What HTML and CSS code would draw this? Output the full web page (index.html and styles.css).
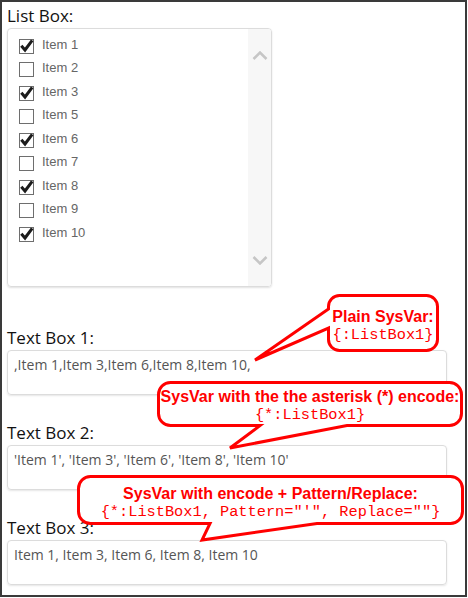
FILE: index.html
```html
<!DOCTYPE html>
<html lang="en">
<head>
  <meta charset="UTF-8">
  <title>SysVar Encode Demo</title>
  <link rel="stylesheet" href="styles.css">
</head>
<body>
  <svg class="defs" width="0" height="0">
    <symbol id="box-on" viewBox="0 0 15 15">
      <rect x="0.5" y="0.5" width="14" height="14" fill="#fff" stroke="#6e6e6e"/>
      <path d="M2.3 6.8 L6 11 L13.2 1.3" fill="none" stroke="#1c1c1c" stroke-width="3"/>
    </symbol>
    <symbol id="box-off" viewBox="0 0 15 15">
      <rect x="0.5" y="0.5" width="14" height="14" fill="#fff" stroke="#6e6e6e"/>
    </symbol>
  </svg>

  <div class="page">
    <div class="field list-field">
      <div class="label">List Box:</div>
      <div class="listbox">
        <ul class="items">
          <li><svg class="box"><use href="#box-on"/></svg>Item 1</li>
          <li><svg class="box"><use href="#box-off"/></svg>Item 2</li>
          <li><svg class="box"><use href="#box-on"/></svg>Item 3</li>
          <li><svg class="box"><use href="#box-off"/></svg>Item 5</li>
          <li><svg class="box"><use href="#box-on"/></svg>Item 6</li>
          <li><svg class="box"><use href="#box-off"/></svg>Item 7</li>
          <li><svg class="box"><use href="#box-on"/></svg>Item 8</li>
          <li><svg class="box"><use href="#box-off"/></svg>Item 9</li>
          <li><svg class="box"><use href="#box-on"/></svg>Item 10</li>
        </ul>
        <div class="scroll">
          <svg class="arrow" viewBox="0 0 16 9"><polyline points="1.5,8 8,1.5 14.5,8"/></svg>
          <svg class="arrow" viewBox="0 0 16 9"><polyline points="1.5,1 8,7.5 14.5,1"/></svg>
        </div>
      </div>
    </div>

    <div class="field text-field">
      <div class="label">Text Box 1:</div>
      <div class="textbox">,Item 1,Item 3,Item 6,Item 8,Item 10,</div>
    </div>

    <div class="field text-field">
      <div class="label">Text Box 2:</div>
      <div class="textbox">'Item 1', 'Item 3', 'Item 6', 'Item 8', 'Item 10'</div>
    </div>

    <div class="field text-field">
      <div class="label">Text Box 3:</div>
      <div class="textbox">Item 1, Item 3, Item 6, Item 8, Item 10</div>
    </div>

    <!-- callouts drawn over the form -->
    <svg class="bubbles" viewBox="0 0 468 598">
      <path d="M339.5,295.5 H426.5 A11,11 0 0 1 437.5,306.5 V339.5 A11,11 0 0 1 426.5,350.5 H339.5 A11,11 0 0 1 328.5,339.5 V328 L255,360 L328.5,309 V306.5 A11,11 0 0 1 339.5,295.5 Z"/>
      <path d="M170.5,382.5 H449.5 A12,12 0 0 1 461.5,394.5 V413.5 A12,12 0 0 1 449.5,425.5 H347 L230,448 L260,425.5 H170.5 A12,12 0 0 1 158.5,413.5 V394.5 A12,12 0 0 1 170.5,382.5 Z"/>
      <path d="M90.5,476.5 H450.5 A12,12 0 0 1 462.5,488.5 V511.5 A12,12 0 0 1 450.5,523.5 H317 L202,540 L210,523.5 H90.5 A12,12 0 0 1 78.5,511.5 V488.5 A12,12 0 0 1 90.5,476.5 Z"/>
    </svg>

    <div class="note note-1">
      <b>Plain SysVar:</b>
      <code>{:ListBox1}</code>
    </div>
    <div class="note note-2">
      <b>SysVar with the the asterisk (*) encode:</b>
      <code>{*:ListBox1}</code>
    </div>
    <div class="note note-3">
      <b>SysVar with encode + Pattern/Replace:</b>
      <code>{*:ListBox1, Pattern="'", Replace=""}</code>
    </div>
  </div>
</body>
</html>
```

FILE: styles.css
```css
body {
  margin: 0;
  font-family: "Open Sans", sans-serif;
  background-color: #fff;
}

.defs {
  position: absolute;
}

.page {
  position: relative;
  width: 467px;
  height: 597px;
  box-sizing: border-box;
  border: 2px solid #3a3a3a;
  padding: 3px 5px 0;
}

.label {
  font-size: 17px;
  line-height: 22px;
  color: #111;
  margin-bottom: 1px;
}

.list-field {
  margin-bottom: 40px;
}

.text-field {
  margin-bottom: 27px;
}

/* list box */
.listbox {
  display: flex;
  width: 265px;
  height: 259px;
  box-sizing: border-box;
  border: 1px solid #dcdcdc;
  border-radius: 4px;
  box-shadow: 0 1px 2px rgba(0,0,0,0.12);
  overflow: hidden;
}

.items {
  flex: 1;
  list-style: none;
  margin: 0;
  padding: 7.5px 0 0 11px;
}

.items li {
  display: flex;
  align-items: flex-start;
  gap: 8px;
  height: 23.5px;
  font-family: "Liberation Sans", Arial, sans-serif;
  font-size: 13px;
  line-height: 15px;
  color: #666;
}

.box {
  flex: none;
  width: 15px;
  height: 15px;
  margin-top: 2px;
  overflow: visible;
}

.scroll {
  width: 23px;
  background-color: #f7f7f7;
  display: flex;
  flex-direction: column;
  justify-content: space-between;
  align-items: center;
  padding: 22px 0 21px;
  box-sizing: border-box;
}

.arrow {
  width: 16px;
  height: 9px;
}

.arrow polyline {
  fill: none;
  stroke: #c6c6c6;
  stroke-width: 2.5;
}

/* text boxes */
.textbox {
  width: 440px;
  height: 45px;
  box-sizing: border-box;
  border: 1px solid #dcdcdc;
  border-radius: 4px;
  box-shadow: 0 1px 2px rgba(0,0,0,0.1);
  padding: 5px 6px;
  font-size: 14px;
  line-height: 18px;
  color: #555;
  white-space: nowrap;
}

/* callouts */
.bubbles {
  position: absolute;
  left: -2px;
  top: -2px;
  width: 468px;
  height: 598px;
  pointer-events: none;
}

.bubbles path {
  fill: #fff;
  stroke: #f00;
  stroke-width: 3;
}

.note {
  position: absolute;
  text-align: center;
  color: #f00;
  line-height: 18px;
  white-space: nowrap;
}

.note b {
  display: block;
  font: bold 16px/18px "Liberation Sans", Arial, sans-serif;
}

.note code {
  display: block;
  font: 15.3px/18px "Liberation Mono", "Courier New", monospace;
}

.note-1 {
  left: 325px;
  top: 305.5px;
  width: 112px;
}

.note-2 {
  left: 155px;
  top: 386px;
  width: 306px;
}

.note-3 {
  left: 75px;
  top: 483px;
  width: 387px;
}
```
